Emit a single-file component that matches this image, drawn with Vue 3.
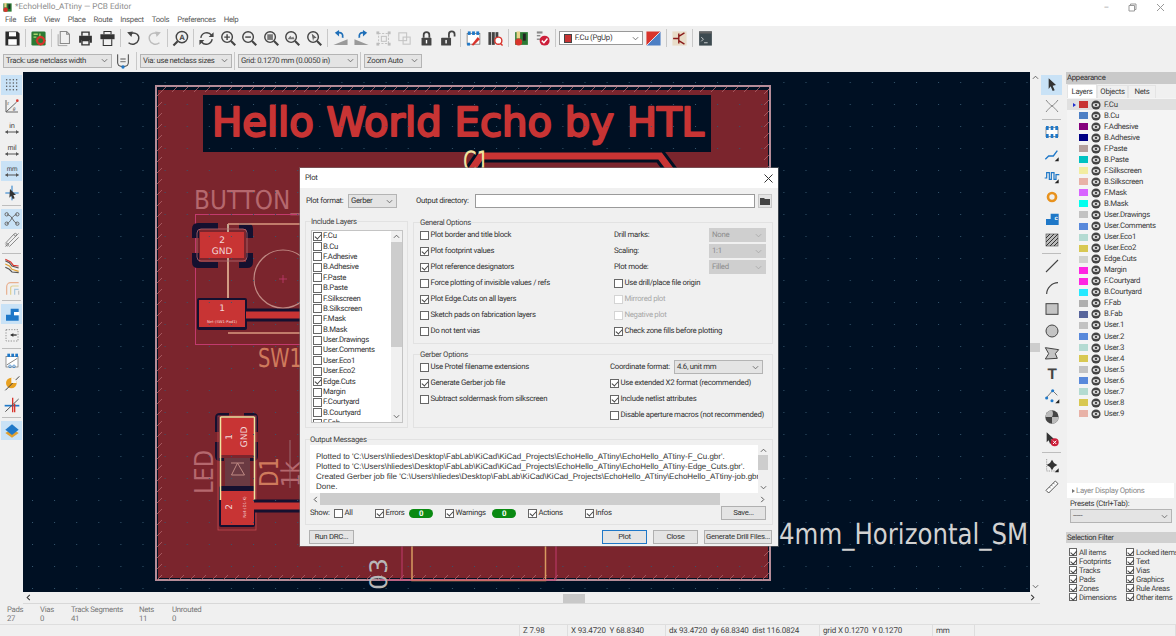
<script setup>
import { ref } from 'vue';

// icon bodies, all drawn on a 24x24 box
const icons = {
  save: '<path fill="#2b2b2b" d="M2 2h17l3 3v17H2z"/><rect x="7" y="3" width="10" height="6" fill="#fff"/><rect x="6" y="13" width="12" height="8" fill="#fff"/>',
  pcb: '<rect x="2" y="2" width="20" height="20" rx="2" fill="#2b7a34"/><path d="M5 6h6M5 10h4M14 5v5" stroke="#a9d66e" stroke-width="2"/><circle cx="15" cy="15" r="5" fill="none" stroke="#d8342c" stroke-width="3"/><path d="M15 8v3M15 19v3M8 15h3M19 15h3" stroke="#d8342c" stroke-width="2"/>',
  page: '<path fill="none" stroke="#8a8a8a" stroke-width="1.5" d="M6 2h9l4 4v13H6zM15 2v4h4"/><path stroke="#8a8a8a" fill="none" d="M3 6v16h13"/>',
  print: '<path fill="#333" d="M3 8h18v10h-3v-4H6v4H3z"/><path fill="none" stroke="#333" stroke-width="2" d="M7 8V3h10v5M7 15h10v6H7z"/>',
  plot: '<path fill="#333" d="M2 6h20v7H2z"/><path fill="none" stroke="#333" stroke-width="1.5" d="M7 6V2h10v4M6 13v9h12v-9"/>',
  undo: '<path fill="none" stroke="#444" stroke-width="2" d="M7 5c9-3 14 3 12 9s-9 8-14 4"/><path fill="#444" d="M3 3l8-1-2 8z"/>',
  redo: '<path fill="none" stroke="#bdbdbd" stroke-width="2" d="M17 5C8 2 3 8 5 14s9 8 14 4"/><path fill="#bdbdbd" d="M21 3l-8-1 2 8z"/>',
  find: '<circle cx="14" cy="10" r="8" fill="none" stroke="#444" stroke-width="2"/><path stroke="#444" stroke-width="3" d="M8 16l-6 6"/><text x="14" y="14" font-size="11" font-weight="700" text-anchor="middle" font-family="Liberation Sans" fill="#444">A</text>',
  refresh: '<path fill="none" stroke="#444" stroke-width="2" d="M4 11a8.500 8.500 0 0 1 15-4M20 13a8.500 8.500 0 0 1-15 4"/><path fill="#444" d="M22 3v7h-7zM2 21v-7h7z"/>',
  zin: '<circle cx="10" cy="10" r="7.500" fill="none" stroke="#444" stroke-width="2"/><path stroke="#444" stroke-width="2" d="M6 10h8M10 6v8"/><path stroke="#444" stroke-width="3" d="M15.500 15.500l6 6"/>',
  zout: '<circle cx="10" cy="10" r="7.500" fill="none" stroke="#444" stroke-width="2"/><path stroke="#444" stroke-width="2" d="M6 10h8"/><path stroke="#444" stroke-width="3" d="M15.500 15.500l6 6"/>',
  zfit: '<circle cx="10" cy="10" r="7.500" fill="none" stroke="#444" stroke-width="2"/><rect x="6" y="6" width="8" height="8" fill="#777"/><path stroke="#444" stroke-width="3" d="M15.500 15.500l6 6"/>',
  zobj: '<circle cx="10" cy="10" r="7.500" fill="none" stroke="#444" stroke-width="2"/><path d="M5 13l4-5 2 3 2-2 2 4z" fill="#777"/><path stroke="#444" stroke-width="3" d="M15.500 15.500l6 6"/>',
  zsel: '<circle cx="10" cy="10" r="7.500" fill="none" stroke="#444" stroke-width="2"/><path d="M8 5l7 6-4 1-1 4z" fill="#666"/><path stroke="#444" stroke-width="3" d="M15.500 15.500l6 6"/>',
  rotl: '<path d="M2 21l20-8v8z" fill="#9a9a9a"/><path fill="none" stroke="#1f6fb8" stroke-width="2.500" d="M8 4c6-1 8 2 7 7"/><path fill="#1f6fb8" d="M10 0v9L4 4z"/>',
  rotr: '<path d="M22 21L2 13v8z" fill="#9a9a9a"/><path fill="none" stroke="#1f6fb8" stroke-width="2.500" d="M16 4c-6-1-8 2-7 7"/><path fill="#1f6fb8" d="M14 0v9l6-5z"/>',
  group: '<g fill="none" stroke="#c4c4c4" stroke-width="1.500"><rect x="5" y="5" width="14" height="14" stroke-dasharray="3 2"/><rect x="9" y="9" width="7" height="7"/></g><g fill="#bdbdbd"><rect x="2" y="2" width="4" height="4"/><rect x="18" y="2" width="4" height="4"/><rect x="2" y="18" width="4" height="4"/><rect x="18" y="18" width="4" height="4"/></g>',
  ungroup: '<g fill="none" stroke="#c4c4c4" stroke-width="1.500"><rect x="4" y="4" width="11" height="11"/><rect x="10" y="10" width="10" height="10"/></g>',
  lock: '<path fill="none" stroke="#444" stroke-width="2.500" d="M8 11V7a4 4 0 0 1 8 0v4"/><rect x="5" y="11" width="14" height="11" rx="1" fill="#444"/><rect x="11" y="14" width="2" height="5" fill="#fff"/>',
  unlock: '<path fill="none" stroke="#444" stroke-width="2.500" d="M14 11V6a4 4 0 0 1 8 0v3"/><rect x="3" y="11" width="14" height="11" rx="1" fill="#444"/><rect x="9" y="14" width="2" height="5" fill="#fff"/>',
  net: '<rect x="3" y="5" width="18" height="15" fill="#fff" stroke="#666"/><g fill="#1f78c8"><rect x="4" y="2" width="4" height="5"/><rect x="10" y="2" width="4" height="5"/><rect x="16" y="2" width="4" height="5"/><rect x="3" y="18" width="4" height="4"/></g><path d="M9 21l9-11 3 3-9 9z" fill="#d8342c"/>',
  lib: '<g fill="#444"><rect x="2" y="3" width="4" height="18"/><rect x="7" y="3" width="4" height="18"/></g><rect x="12" y="3" width="4" height="13" fill="#444"/><circle cx="16" cy="15" r="5" fill="#fff" stroke="#d8342c" stroke-width="2"/><path stroke="#d8342c" stroke-width="2" d="M19 19l3 3"/>',
  board3d: '<rect x="3" y="3" width="18" height="18" fill="#2b7a34"/><rect x="5" y="2" width="5" height="10" fill="#e8d48a"/><rect x="14" y="5" width="4" height="10" fill="#222"/><circle cx="8" cy="17" r="5" fill="#d8342c"/>',
  drc: '<g fill="#888"><rect x="4" y="2" width="8" height="3"/><rect x="4" y="7" width="5" height="2"/><rect x="4" y="12" width="5" height="2"/></g><circle cx="15" cy="15" r="7" fill="#cc1f3a"/><path fill="none" stroke="#fff" stroke-width="2" d="M11 15l3 3 5-6"/>',
  swap: '<path d="M2 2h20L2 22z" fill="#d8342c"/><path d="M22 2v20H2z" fill="#4d7fc4"/><path d="M22 2L2 22" stroke="#fff"/>',
  scripting: '<rect x="3" y="2" width="18" height="20" fill="#3d4a50"/><rect x="3" y="2" width="18" height="3" fill="#666"/><path fill="none" stroke="#fff" d="M6 10l3 3-3 3M10 18h5"/>',
  schem: '<rect x="2" y="2" width="20" height="20" fill="#e8dcc8"/><path fill="none" stroke="#8a1a1a" stroke-width="2" d="M3 12h8M11 5v14M11 9l8-5M11 15l8 5"/>',
  trackw: '<path fill="none" stroke="#444" stroke-width="1.500" d="M4 2v13a5 5 0 0 0 5 5h6a5 5 0 0 0 5-5V2"/><path stroke="#888" stroke-width="2" d="M8 9h8M8 13h8"/><circle cx="12" cy="21" r="2.500" fill="#1f78c8"/>',
  gridd: '<g fill="#555"><circle cx="4" cy="4" r="1.100"/><circle cx="9" cy="4" r="1.100"/><circle cx="14" cy="4" r="1.100"/><circle cx="19" cy="4" r="1.100"/><circle cx="4" cy="9" r="1.100"/><circle cx="9" cy="9" r="1.100"/><circle cx="14" cy="9" r="1.100"/><circle cx="19" cy="9" r="1.100"/><circle cx="4" cy="14" r="1.100"/><circle cx="9" cy="14" r="1.100"/><circle cx="14" cy="14" r="1.100"/><circle cx="19" cy="14" r="1.100"/><circle cx="4" cy="19" r="1.100"/><circle cx="9" cy="19" r="1.100"/><circle cx="14" cy="19" r="1.100"/><circle cx="19" cy="19" r="1.100"/></g>',
  polar: '<path fill="none" stroke="#666" stroke-width="1.500" d="M3 3v18h18M3 21L19 6"/><circle cx="20" cy="4" r="2" fill="#d8342c"/><text x="5" y="10" font-size="8" font-family="Liberation Serif" fill="#444">r</text><text x="13" y="19" font-size="8" font-family="Liberation Serif" font-style="italic" fill="#444">θ</text>',
  inch: '<text x="12" y="12" font-size="11" text-anchor="middle" font-family="Liberation Sans" fill="#444">in</text><path d="M2 18h20" stroke="#555" stroke-width="1.500"/><path d="M2 18l4-3v6zM22 18l-4-3v6z" fill="#555"/>',
  mil: '<text x="12" y="12" font-size="11" text-anchor="middle" font-family="Liberation Sans" fill="#444">mil</text><path d="M2 18h20" stroke="#555" stroke-width="1.500"/><path d="M2 18l4-3v6zM22 18l-4-3v6z" fill="#555"/>',
  mm: '<text x="12" y="12" font-size="10" text-anchor="middle" font-family="Liberation Sans" fill="#444">mm</text><path d="M2 18h20" stroke="#555" stroke-width="1.500"/><path d="M2 18l4-3v6zM22 18l-4-3v6z" fill="#555"/>',
  cursor: '<path stroke="#1f78c8" stroke-width="1.500" d="M12 1v22M2 12h20"/><path d="M9 6l9 9-4 0 2 5-3 1-2-5-3 3z" fill="#333"/>',
  ratsnest: '<g fill="none" stroke="#666" stroke-width="1.500"><path d="M5 5c8 2 8 12 15 14M19 5C11 7 11 17 4 19"/><circle cx="4" cy="5" r="2.500"/><circle cx="20" cy="5" r="2.500"/><circle cx="4" cy="19" r="2.500"/><circle cx="20" cy="19" r="2.500"/></g>',
  curved: '<g fill="none" stroke="#8a8a8a" stroke-width="1.500"><path d="M2 17L15 3M8 22L22 8"/><circle cx="17" cy="4" r="2"/><circle cx="5" cy="19" r="2"/></g><path stroke="#666" d="M2 22L22 2"/>',
  hilite: '<g fill="none" stroke-width="1.800"><path stroke="#555" d="M2 4l6 3 4 5 10 3"/><path stroke="#e0a030" d="M2 9l6 3 4 5 10 3"/><path stroke="#d8342c" d="M2 2l8 4 4 5 8 1"/><path stroke="#555" d="M2 14l6 3 4 4 10 1"/></g>',
  vias: '<g fill="none" stroke-width="1.800"><path stroke="#e8b090" d="M4 22V10a6 6 0 0 1 6-6h12"/><path stroke="#e0d090" d="M10 22V12a3 3 0 0 1 3-3h9"/><path stroke="#a8c8e0" d="M16 22V14h6"/><path stroke="#c0c0c0" d="M22 22V16"/></g>',
  pad: '<path d="M3 22V13h7V4h12v18z" fill="#1f78c8"/><rect x="15" y="9" width="8" height="5" fill="#fff"/>',
  dashpad: '<rect x="3" y="4" width="18" height="17" fill="none" stroke="#666" stroke-dasharray="2 2"/><path d="M10 12h9" stroke="#333" stroke-width="2"/><path d="M10 12l4-3v6z" fill="#333"/>',
  netc: '<rect x="3" y="5" width="18" height="16" fill="#fff" stroke="#666"/><g fill="#1f78c8"><rect x="5" y="1" width="4" height="5"/><rect x="11" y="1" width="4" height="5"/><rect x="17" y="1" width="4" height="5"/></g><path d="M4 18L20 8" stroke="#888" stroke-width="1.500"/><g fill="none" stroke="#1f78c8"><circle cx="9" cy="20" r="2"/><circle cx="15" cy="20" r="2"/></g>',
  orange: '<circle cx="11" cy="12" r="8" fill="#e8a020"/><path d="M2 23L23 2" stroke="#444" stroke-width="1.500"/><path d="M11 4a8 8 0 0 1 8 8l-8 0z" fill="#f4f4f4"/>',
  cross: '<path d="M1 13h22" stroke="#1f78c8" stroke-width="2.500"/><path d="M13 1v22M16 10v13" stroke="#d8342c" stroke-width="2"/><path d="M2 22L22 3" stroke="#555" stroke-width="1.500"/>',
  layers: '<path d="M12 9l10 6-10 7-10-7z" fill="#e0a030"/><path d="M12 2l10 8-10 8-10-8z" fill="#1f78c8"/>',
  pointer: '<path d="M7 2l11 10-5 1 3 7-3 1-3-7-3 4z" fill="#333"/>',
  xcross: '<g stroke="#777" stroke-width="1.300" fill="none"><path d="M3 3c5 6 5 6 9 9s4 3 9 9M21 3c-5 6-5 6-9 9s-4 3-9 9"/></g>',
  fp: '<rect x="3" y="5" width="18" height="14" fill="#fff" stroke="#666"/><g fill="#1f78c8"><rect x="3" y="3" width="4" height="6"/><rect x="10" y="3" width="4" height="6"/><rect x="17" y="3" width="4" height="6"/><rect x="3" y="15" width="4" height="6"/><rect x="10" y="15" width="4" height="6"/><rect x="17" y="15" width="4" height="6"/></g>',
  route: '<path fill="none" stroke="#1f78c8" stroke-width="2" d="M2 20l5-5h7l6-8"/><path d="M16 23l6-6v6z" fill="#222"/>',
  tune: '<path fill="none" stroke="#1f78c8" stroke-width="1.800" d="M1 15h3V7h4v10h3V7h4v10h3V10h5"/><path d="M16 23l6-6v6z" fill="#222"/>',
  via: '<circle cx="12" cy="12" r="6" fill="none" stroke="#e8921e" stroke-width="4"/>',
  padc: '<path d="M3 21V12h7V4h12v17z" fill="#1f78c8"/><text x="18" y="14" font-size="9" font-weight="700" text-anchor="middle" font-family="Liberation Sans" fill="#fff">c</text>',
  zone: '<rect x="3" y="3" width="18" height="18" fill="#bbb" stroke="#555"/><path d="M3 9l6-6M3 15L15 3M3 21L21 3M9 21L21 9M15 21l6-6" stroke="#333" stroke-width="1.500"/>',
  line: '<path d="M3 21L21 3" stroke="#444" stroke-width="1.700"/>',
  arc: '<path d="M4 21C4 12 12 4 21 4" fill="none" stroke="#444" stroke-width="1.700"/>',
  rect: '<rect x="3" y="4" width="18" height="16" fill="#c4c4c4" stroke="#444" stroke-width="1.500"/>',
  circle: '<circle cx="12" cy="12" r="9" fill="#c4c4c4" stroke="#444" stroke-width="1.500"/>',
  poly: '<path d="M2 4l20 3-5 6 3 7-18 1 5-8z" fill="#c4c4c4" stroke="#444" stroke-width="1.500"/>',
  text: '<text x="12" y="20" font-size="23" font-weight="700" text-anchor="middle" font-family="Liberation Sans" fill="#444">T</text>',
  dim: '<path d="M4 14l9-10 7 7" fill="none" stroke="#666" stroke-width="1.300"/><circle cx="4" cy="15" r="2.300" fill="#1f78c8"/><circle cx="12" cy="19" r="2.300" fill="#1f78c8"/><circle cx="13" cy="4" r="2.300" fill="#1f78c8"/><path d="M17 23l6-6v6z" fill="#222"/>',
  anchor: '<circle cx="12" cy="12" r="10" fill="#444"/><path d="M12 2a10 10 0 0 1 0 10H2a10 10 0 0 1 10-10zM12 12h10a10 10 0 0 1-10 10z" fill="#bbb"/>',
  del: '<path d="M4 2l11 10-5 1 2 5-3 1-2-5-3 3z" fill="#333"/><circle cx="16" cy="17" r="6" fill="#cc1f3a"/><path d="M13.500 14.500l5 5M18.500 14.500l-5 5" stroke="#fff" stroke-width="1.500"/>',
  origin: '<path d="M4 3v18h17" fill="none" stroke="#777" stroke-dasharray="2 1.500"/><path d="M12 4l3 5 5 3-5 3-3 5-3-5-5-3 5-3z" fill="#333"/><path d="M16 23l6-6v6z" fill="#222"/>',
  measure: '<path d="M3 17L17 3l4 4L7 21z" fill="#fff" stroke="#555" stroke-width="1.500"/><path d="M8 12l2 2M11 9l2 2M14 6l2 2" stroke="#555"/>'
};

const topBar = ['save', '|', 'pcb', '|', 'page', 'print', 'plot', '|', 'undo', 'redo', '|', 'find', '|', 'refresh', 'zin', 'zout', 'zfit', 'zobj', 'zsel', '|', 'rotl', 'rotr', 'group', 'ungroup', 'lock', 'unlock', '|', 'net', 'lib', '|', 'board3d', 'drc', '|'];

const leftBar = [
  { icon: 'gridd', on: true }, { icon: 'polar' }, { icon: 'inch' }, { icon: 'mil' }, { icon: 'mm', on: true }, { icon: 'cursor' },
  { sep: true }, { icon: 'ratsnest', on: true }, { icon: 'curved' }, { sep: true }, { icon: 'hilite' }, { icon: 'vias' },
  { sep: true }, { icon: 'pad', on: true }, { icon: 'dashpad' }, { sep: true }, { icon: 'netc' }, { icon: 'orange' }, { icon: 'cross' },
  { sep: true }, { icon: 'layers', on: true }
];

const rightBar = [
  { icon: 'pointer', on: true }, { icon: 'xcross' }, { sep: true }, { icon: 'fp' }, { icon: 'route' }, { icon: 'tune' }, { icon: 'via' }, { icon: 'padc' }, { icon: 'zone' },
  { sep: true }, { icon: 'line' }, { icon: 'arc' }, { icon: 'rect' }, { icon: 'circle' }, { icon: 'poly' }, { icon: 'text' }, { icon: 'dim' }, { icon: 'anchor' }, { icon: 'del' },
  { sep: true }, { icon: 'origin' }, { icon: 'measure' }
];

const layers = [
  ['F.Cu', '#c83434'], ['B.Cu', '#4d7fc4'], ['F.Adhesive', '#84007c'], ['B.Adhesive', '#000084'], ['F.Paste', '#b4a09c'], ['B.Paste', '#00c2c2'],
  ['F.Silkscreen', '#f2eda1'], ['B.Silkscreen', '#e8b2a7'], ['F.Mask', '#d864ff'], ['B.Mask', '#02ffee'], ['User.Drawings', '#c2c2c2'], ['User.Comments', '#5989db'],
  ['User.Eco1', '#b4dbd2'], ['User.Eco2', '#d8c852'], ['Edge.Cuts', '#d0d2cd'], ['Margin', '#ff26e2'], ['F.Courtyard', '#ff26e2'], ['B.Courtyard', '#26e9ff'],
  ['F.Fab', '#afafaf'], ['B.Fab', '#58659b'], ['User.1', '#c2c2c2'], ['User.2', '#5989db'], ['User.3', '#b4dbd2'], ['User.4', '#d8c852'],
  ['User.5', '#c2c2c2'], ['User.6', '#5989db'], ['User.7', '#b4dbd2'], ['User.8', '#d8c852'], ['User.9', '#e8b2a7']
];

const filters = [
  ['All items', 'Locked items'], ['Footprints', 'Text'], ['Tracks', 'Vias'], ['Pads', 'Graphics'], ['Zones', 'Rule Areas'], ['Dimensions', 'Other items']
];

const plotLayers = ['F.Cu', 'B.Cu', 'F.Adhesive', 'B.Adhesive', 'F.Paste', 'B.Paste', 'F.Silkscreen', 'B.Silkscreen', 'F.Mask', 'B.Mask', 'User.Drawings', 'User.Comments', 'User.Eco1', 'User.Eco2', 'Edge.Cuts', 'Margin', 'F.Courtyard', 'B.Courtyard', 'F.Fab'];
const checkedLayers = ref(['F.Cu', 'Edge.Cuts']);

const generalLeft = [
  ['Plot border and title block', false], ['Plot footprint values', true], ['Plot reference designators', true], ['Force plotting of invisible values / refs', false],
  ['Plot Edge.Cuts on all layers', true], ['Sketch pads on fabrication layers', false], ['Do not tent vias', false]
];
const generalSelects = [['Drill marks:', 'None'], ['Scaling:', '1:1'], ['Plot mode:', 'Filled']];
const generalRight = [
  ['Use drill/place file origin', false, false], ['Mirrored plot', false, true], ['Negative plot', false, true], ['Check zone fills before plotting', true, false]
];
const gerberLeft = [['Use Protel filename extensions', false], ['Generate Gerber job file', true], ['Subtract soldermask from silkscreen', false]];
const gerberRight = [['Use extended X2 format (recommended)', true], ['Include netlist attributes', true], ['Disable aperture macros (not recommended)', false]];

const messages = [
  "Plotted to 'C:\\Users\\hliedes\\Desktop\\FabLab\\KiCad\\KiCad_Projects\\EchoHello_ATtiny\\EchoHello_ATtiny-F_Cu.gbr'.",
  "Plotted to 'C:\\Users\\hliedes\\Desktop\\FabLab\\KiCad\\KiCad_Projects\\EchoHello_ATtiny\\EchoHello_ATtiny-Edge_Cuts.gbr'.",
  "Created Gerber job file 'C:\\Users\\hliedes\\Desktop\\FabLab\\KiCad\\KiCad_Projects\\EchoHello_ATtiny\\EchoHello_ATtiny-job.gbrjob'.",
  'Done.'
];

const stats = [['Pads', '27', 33], ['Vias', '0', 31], ['Track Segments', '41', 68], ['Nets', '11', 33], ['Unrouted', '0', 50]];
const statusCells = [['', 520], ['Z 7.98', 48], ['X 93.4720  Y 68.8340', 98], ['dx 93.4720  dy 68.8340  dist 116.0824', 154], ['grid X 0.1270  Y 0.1270', 113], ['mm', 42], ['', 201]];
</script>

<template>
  <div class="app">
    <div class="titlebar">
      <svg class="app-logo" viewBox="0 0 24 24" v-html="icons.board3d"></svg>
      <span class="title-text">*EchoHello_ATtiny — PCB Editor</span>
      <div class="win-btns">
        <span>–</span>
        <svg width="9" height="9" viewBox="0 0 9 9"><path d="M1 2.500h5.500V8H1zM2.500 2.500V1H8v5.500H6.500" fill="none" stroke="#999"/></svg>
        <svg width="9" height="9" viewBox="0 0 9 9"><path d="M1 1l7 7M8 1L1 8" stroke="#999"/></svg>
      </div>
    </div>
    <div class="menubar">
      <span v-for="m in ['File', 'Edit', 'View', 'Place', 'Route', 'Inspect', 'Tools', 'Preferences', 'Help']" :key="m">{{ m }}</span>
    </div>

    <div class="toolbar">
      <template v-for="(name, i) in topBar" :key="i">
        <span v-if="name === '|'" class="tsep"></span>
        <span v-else class="tool"><svg viewBox="0 0 24 24" v-html="icons[name]"></svg></span>
      </template>
      <div class="combo layer-combo"><i class="swatch"></i><span>F.Cu (PgUp)</span><svg class="chev" viewBox="0 0 8 5"><path d="M1 1l3 3 3-3" fill="none" stroke="#666"/></svg></div>
      <span class="tool"><svg viewBox="0 0 24 24" v-html="icons.swap"></svg></span>
      <span class="tsep"></span>
      <span class="tool"><svg viewBox="0 0 24 24" v-html="icons.schem"></svg></span>
      <span class="tsep"></span>
      <span class="tool"><svg viewBox="0 0 24 24" v-html="icons.scripting"></svg></span>
    </div>

    <div class="toolbar2">
      <div class="combo w-track"><span>Track: use netclass width</span><svg class="chev" viewBox="0 0 8 5"><path d="M1 1l3 3 3-3" fill="none" stroke="#666"/></svg></div>
      <span class="tool small"><svg viewBox="0 0 24 24" v-html="icons.trackw"></svg></span>
      <span class="tsep tall"></span>
      <div class="combo w-via"><span>Via: use netclass sizes</span><svg class="chev" viewBox="0 0 8 5"><path d="M1 1l3 3 3-3" fill="none" stroke="#666"/></svg></div>
      <span class="tsep tall"></span>
      <div class="combo w-grid"><span>Grid: 0.1270 mm (0.0050 in)</span><svg class="chev" viewBox="0 0 8 5"><path d="M1 1l3 3 3-3" fill="none" stroke="#666"/></svg></div>
      <span class="tsep tall"></span>
      <div class="combo w-zoom"><span>Zoom Auto</span><svg class="chev" viewBox="0 0 8 5"><path d="M1 1l3 3 3-3" fill="none" stroke="#666"/></svg></div>
    </div>

    <div class="workspace">
      <div class="side-bar left-bar">
        <template v-for="(t, i) in leftBar" :key="i">
          <span v-if="t.sep" class="vsep"></span>
          <span v-else class="vtool" :class="{ on: t.on }"><svg viewBox="0 0 24 24" v-html="icons[t.icon]"></svg></span>
        </template>
      </div>

      <svg class="canvas" viewBox="23 72 1007 520" width="1007" height="520">
        <defs>
          <pattern id="dots" x="32" y="82" width="22.100" height="22" patternUnits="userSpaceOnUse">
            <rect width="1" height="1" fill="#35566e" />
          </pattern>
          <pattern id="hatch" x="0" y="0" width="11" height="11" patternUnits="userSpaceOnUse">
            <path d="M0 11L11 0" stroke="#b0636b" stroke-width="0.800" />
          </pattern>
        </defs>
        <rect x="23" y="72" width="1007" height="520" fill="#001023" />

        <!-- board -->
        <rect x="156" y="86" width="614" height="494" fill="#001023" stroke="#b58c98" stroke-width="2" />
        <rect x="158" y="90" width="610" height="488" fill="#7b252d" />
        <g fill="url(#hatch)">
          <rect x="157" y="87" width="612" height="5" />
          <rect x="157" y="87" width="5" height="493" />
          <rect x="157" y="575" width="612" height="5" />
          <rect x="764" y="87" width="5" height="493" />
        </g>

        <!-- title knockout -->
        <rect x="203" y="95" width="508" height="57" fill="#001023" />
        <text class="pcb-text" x="212" y="136" font-size="40" fill="#c83434" stroke="#c83434" stroke-width="2.200" stroke-linejoin="round" textLength="492" lengthAdjust="spacingAndGlyphs">Hello World Echo by HTL</text>

        <!-- top track and C1 -->
        <path d="M470 172L481 156H660L672 172" fill="none" stroke="#001023" stroke-width="13" />
        <path d="M470 172L481 156H660L672 172" fill="none" stroke="#c83434" stroke-width="7" />
        <text class="pcb-text" x="463" y="171" font-size="28" fill="#f0e4a0" textLength="26" lengthAdjust="spacingAndGlyphs">C1</text>

        <!-- button footprint -->
        <text class="pcb-text" x="194" y="209" font-size="26" fill="#b5686e" textLength="108" lengthAdjust="spacingAndGlyphs">BUTTON_</text>
        <rect x="195.500" y="214.500" width="140" height="130" fill="none" stroke="#c23a6e" />
        <path d="M192 238v-9q0-6 6-6h20v6h-19v9zM253 238v-9q0-6-6-6h-8v6h7v9zM192 253v9q0 6 6 6h20v-6h-19v-9zM253 253v9q0 6-6 6h-8v-6h7v-9z" fill="#14102f" />
        <path d="M228 224V330" stroke="#d8d0b0" stroke-width="1.500" />
        <path d="M228 224h22l300 0" stroke="#d89a80" stroke-width="1.500" />
        <path d="M228 333h270" stroke="#d89a80" stroke-width="1.500" />
        <path d="M228 262V298" stroke="#d89a80" stroke-width="1.500" />
        <rect x="197" y="229" width="50" height="32" rx="4" fill="none" stroke="#b86a70" stroke-width="0.800" />
        <rect x="200" y="232" width="44" height="26" fill="#c83434" />
        <rect x="197" y="298" width="50" height="32" rx="2" fill="#14102f" />
        <rect x="199" y="300" width="46" height="27" fill="#c83434" />
        <path d="M246 315H300" stroke="#14102f" stroke-width="13" />
        <path d="M246 315H300" stroke="#c83434" stroke-width="7" />
        <text class="pad-text" x="222" y="243" font-size="9" text-anchor="middle">2</text>
        <text class="pad-text" x="222" y="254" font-size="9" text-anchor="middle">GND</text>
        <text class="pad-text" x="222" y="311" font-size="9" text-anchor="middle">1</text>
        <text class="pad-text" x="222" y="323" font-size="3.800" text-anchor="middle">Net-(SW1-Pad1)</text>
        <circle cx="283" cy="279" r="29" fill="none" stroke="#c08a84" stroke-width="1.200" />
        <path d="M279 279h8M283 275v8" stroke="#c23a6e" stroke-width="0.800" />
        <text class="pcb-text" x="258" y="367" font-size="26" fill="#cf7a5c" textLength="44" lengthAdjust="spacingAndGlyphs">SW1</text>

        <!-- led footprint -->
        <path d="M215 432v-14q0-5 5-5h9v3h-10v16zM258 432v-14q0-5-5-5h-9v3h10v16zM215 442v14q0 5 5 5h4v-3h-5v-16zM258 442v14q0 5-5 5h-4v-3h5v-16z" fill="#14102f" />
        <rect x="218" y="416" width="38" height="114" fill="none" stroke="#c2484f" stroke-width="0.800" />
        <rect x="221" y="418" width="33" height="37" fill="#c83434" />
        <rect x="219" y="486" width="36" height="41" rx="2" fill="#14102f" />
        <rect x="221" y="491" width="33" height="34" fill="#c83434" />
        <path d="M220.500 417V500M254.500 417V500M220.500 417H254.500" fill="none" stroke="#f0e4a0" stroke-width="1.500" />
        <path d="M254 506H300" stroke="#14102f" stroke-width="13" />
        <path d="M254 506H300" stroke="#c83434" stroke-width="7" />
        <rect x="225" y="458" width="25" height="28" fill="#6a3a42" />
        <path d="M231 463h13M237.500 463l-6 12h13z" fill="none" stroke="#c08a84" />
        <text class="pad-text" transform="translate(232 437) rotate(-90)" font-size="9" text-anchor="middle">1</text>
        <text class="pad-text" transform="translate(247 437) rotate(-90)" font-size="9" text-anchor="middle">GND</text>
        <text class="pad-text" transform="translate(232 507) rotate(-90)" font-size="9" text-anchor="middle">2</text>
        <text class="pad-text" transform="translate(246 507) rotate(-90)" font-size="4" text-anchor="middle">Net-(D1-K)</text>
        <text class="pcb-text" transform="translate(213 494) rotate(-90)" font-size="26" fill="#b5686e" textLength="44" lengthAdjust="spacingAndGlyphs">LED</text>
        <text class="pcb-text" transform="translate(278 487) rotate(-90)" font-size="26" fill="#cf7a5c" textLength="30" lengthAdjust="spacingAndGlyphs">D1</text>
        <text class="pcb-text" transform="translate(300 487) rotate(-90)" font-size="26" fill="#b5686e" textLength="26" lengthAdjust="spacingAndGlyphs">1k</text>
        <path d="M290 440V488" stroke="#9a6a70" />

        <!-- below and right of the dialog -->
        <path d="M412 545V580.500H545.500V545" fill="none" stroke="#d89a60" stroke-width="1.500" />
        <path d="M556 545V580H380M402 545V580" fill="none" stroke="#c23a6e" />
        <text class="pcb-text" transform="translate(387 590) rotate(-90)" font-size="24" fill="#b8b8b8" textLength="32" lengthAdjust="spacingAndGlyphs">03</text>
        <text class="pcb-text" x="779" y="544" font-size="29" fill="#d2d2d2" textLength="268" lengthAdjust="spacingAndGlyphs">4mm_Horizontal_SMD</text>

        <rect x="23" y="72" width="1007" height="520" fill="url(#dots)" />
      </svg>

      <div class="vscroll">
        <svg class="sb-arrow" viewBox="0 0 8 5"><path d="M1 4l3-3 3 3" fill="none" stroke="#555"/></svg>
        <span class="vthumb"></span>
        <svg class="sb-arrow" viewBox="0 0 8 5"><path d="M1 1l3 3 3-3" fill="none" stroke="#555"/></svg>
      </div>

      <div class="side-bar right-bar">
        <template v-for="(t, i) in rightBar" :key="i">
          <span v-if="t.sep" class="vsep"></span>
          <span v-else class="vtool" :class="{ on: t.on }"><svg viewBox="0 0 24 24" v-html="icons[t.icon]"></svg></span>
        </template>
      </div>

      <div class="appearance">
        <div class="pane-head">Appearance</div>
        <div class="tabs"><span class="tab active">Layers</span><span class="tab t-obj">Objects</span><span class="tab t-nets">Nets</span></div>
        <div class="layer-list">
          <div v-for="(l, i) in layers" :key="l[0]" class="layer-row" :class="{ current: i === 0 }">
            <span class="layer-arrow"><i v-if="i === 0"></i></span>
            <i class="layer-swatch" :style="{ background: l[1] }"></i>
            <svg class="eye" viewBox="0 0 12 12"><circle cx="6" cy="6" r="5.500" fill="#444"/><ellipse cx="6" cy="6" rx="3.800" ry="2.300" fill="#ddd"/><circle cx="6" cy="6" r="1.400" fill="#444"/></svg>
            <span>{{ l[0] }}</span>
          </div>
        </div>
        <div class="display-opts"><i class="tri"></i>Layer Display Options</div>
        <div class="presets-label">Presets (Ctrl+Tab):</div>
        <div class="combo presets"><span>-----</span><svg class="chev" viewBox="0 0 8 5"><path d="M1 1l3 3 3-3" fill="none" stroke="#666"/></svg></div>
        <div class="pane-head filter-head">Selection Filter</div>
        <div class="filter-grid">
          <template v-for="f in filters" :key="f[0]">
            <label class="cb-row"><i class="cb on"></i>{{ f[0] }}</label>
            <label class="cb-row"><i class="cb on"></i>{{ f[1] }}</label>
          </template>
        </div>
      </div>

      <div class="hscroll">
        <svg class="sb-arrow-h" viewBox="0 0 5 8"><path d="M4 1L1 4l3 3" fill="none" stroke="#333" stroke-width="1.200"/></svg>
        <span class="hthumb"></span>
        <svg class="sb-arrow-h" viewBox="0 0 5 8"><path d="M1 1l3 3-3 3" fill="none" stroke="#333" stroke-width="1.200"/></svg>
      </div>
    </div>

    <div class="msg-panel">
      <div v-for="s in stats" :key="s[0]" class="stat" :style="{ width: s[2] + 'px' }"><span>{{ s[0] }}</span><span>{{ s[1] }}</span></div>
    </div>
    <div class="statusbar">
      <span v-for="(c, i) in statusCells" :key="i" class="status-cell" :style="{ width: c[1] + 'px' }">{{ c[0] }}</span>
    </div>

    <!-- Plot dialog -->
    <div class="dialog">
      <div class="dlg-title">
        <span>Plot</span>
        <svg width="9" height="9" viewBox="0 0 9 9"><path d="M.5.5l8 8M8.500.5l-8 8" stroke="#333"/></svg>
      </div>
      <div class="dlg-head">
        <span class="lbl-fmt">Plot format:</span>
        <div class="combo w-fmt"><span>Gerber</span><svg class="chev" viewBox="0 0 8 5"><path d="M1 1l3 3 3-3" fill="none" stroke="#666"/></svg></div>
        <span class="lbl-dir">Output directory:</span>
        <div class="dir-input"></div>
        <span class="folder-btn"><svg width="10" height="8" viewBox="0 0 10 8"><path d="M0 1h4l1 1h5v6H0z" fill="#444"/></svg></span>
      </div>

      <div class="dlg-main">
        <fieldset class="group layers-group">
          <legend>Include Layers</legend>
          <div class="listbox">
            <div class="list-items">
              <label v-for="p in plotLayers" :key="p" class="list-row"><i class="cb big" :class="{ on: checkedLayers.includes(p) }"></i>{{ p }}</label>
            </div>
            <div class="list-scroll">
              <svg class="sb-arrow" viewBox="0 0 8 5"><path d="M1 4l3-3 3 3" fill="none" stroke="#555"/></svg>
              <span class="list-thumb"></span>
              <svg class="sb-arrow" viewBox="0 0 8 5"><path d="M1 1l3 3 3-3" fill="none" stroke="#555"/></svg>
            </div>
          </div>
        </fieldset>

        <div class="options-col">
          <fieldset class="group general">
            <legend>General Options</legend>
            <div class="opt-grid general-grid">
              <div>
                <label v-for="o in generalLeft" :key="o[0]" class="opt-row"><i class="cb big" :class="{ on: o[1] }"></i>{{ o[0] }}</label>
              </div>
              <div>
                <div v-for="s in generalSelects" :key="s[0]" class="opt-row select-row">
                  <span>{{ s[0] }}</span>
                  <div class="combo disabled w-drill"><span>{{ s[1] }}</span><svg class="chev" viewBox="0 0 8 5"><path d="M1 1l3 3 3-3" fill="none" stroke="#aaa"/></svg></div>
                </div>
                <label v-for="o in generalRight" :key="o[0]" class="opt-row" :class="{ dim: o[2] }"><i class="cb big" :class="{ on: o[1] }"></i>{{ o[0] }}</label>
              </div>
            </div>
          </fieldset>

          <fieldset class="group gerber">
            <legend>Gerber Options</legend>
            <div class="opt-grid gerber-grid">
              <div>
                <label v-for="o in gerberLeft" :key="o[0]" class="opt-row"><i class="cb big" :class="{ on: o[1] }"></i>{{ o[0] }}</label>
              </div>
              <div>
                <div class="opt-row select-row">
                  <span>Coordinate format:</span>
                  <div class="combo w-coord"><span>4.6, unit mm</span><svg class="chev" viewBox="0 0 8 5"><path d="M1 1l3 3 3-3" fill="none" stroke="#666"/></svg></div>
                </div>
                <label v-for="o in gerberRight" :key="o[0]" class="opt-row"><i class="cb big" :class="{ on: o[1] }"></i>{{ o[0] }}</label>
              </div>
            </div>
          </fieldset>
        </div>
      </div>

      <fieldset class="group output">
        <legend>Output Messages</legend>
        <div class="msg-wrap">
          <div class="msg-text">
            <div v-for="(m, i) in messages" :key="i">{{ m }}</div>
          </div>
          <div class="msg-vscroll">
            <svg class="sb-arrow" viewBox="0 0 8 5"><path d="M1 4l3-3 3 3" fill="none" stroke="#555"/></svg>
            <span class="msg-vthumb"></span>
            <svg class="sb-arrow" viewBox="0 0 8 5"><path d="M1 1l3 3 3-3" fill="none" stroke="#555"/></svg>
          </div>
        </div>
        <div class="msg-hscroll">
          <svg class="sb-arrow-h" viewBox="0 0 5 8"><path d="M4 1L1 4l3 3" fill="none" stroke="#444"/></svg>
          <span class="msg-hthumb"></span>
          <svg class="sb-arrow-h" viewBox="0 0 5 8"><path d="M1 1l3 3-3 3" fill="none" stroke="#444"/></svg>
        </div>
        <div class="show-row">
          <span class="show-lbl">Show:</span>
          <label class="opt-row w-all"><i class="cb big"></i>All</label>
          <label class="opt-row w-err"><i class="cb big on"></i>Errors</label>
          <span class="pill pill-err">0</span>
          <label class="opt-row w-warn"><i class="cb big on"></i>Warnings</label>
          <span class="pill pill-warn">0</span>
          <label class="opt-row w-act"><i class="cb big on"></i>Actions</label>
          <label class="opt-row w-inf"><i class="cb big on"></i>Infos</label>
          <button class="btn save">Save...</button>
        </div>
      </fieldset>

      <div class="dlg-buttons">
        <button class="btn">Run DRC...</button>
        <span class="spacer"></span>
        <button class="btn primary">Plot</button>
        <button class="btn">Close</button>
        <button class="btn wide">Generate Drill Files...</button>
      </div>
    </div>
  </div>
</template>

<style scoped>
.app {
  position: relative;
  width: 1176px;
  height: 636px;
  overflow: hidden;
  background: #f0f0f0;
  font-family: Roboto, sans-serif;
  font-size: 7.800px;
  line-height: 10px;
  letter-spacing: -0.3px;
  text-rendering: geometricPrecision;
  white-space: nowrap;
  color: #3a3a3a;
}

.pcb-text { font-family: "DejaVu Sans", sans-serif; letter-spacing: 0; }
.pad-text { font-family: "DejaVu Sans", sans-serif; letter-spacing: 0; fill: #f2d8d8; }

.titlebar {
  height: 14px;
  background: #fff;
  display: flex;
  align-items: center;
  padding-left: 2px;
  font-size: 8.200px;
  letter-spacing: 0;
  color: #8c8c8c;
}
.app-logo { width: 11px; height: 11px; margin-right: 2px; }
.win-btns { margin-left: auto; display: flex; align-items: center; gap: 19px; padding-right: 11px; padding-top: 1px; }

.menubar {
  height: 12px;
  background: #fff;
  display: flex;
  gap: 8px;
  padding-left: 5px;
  align-items: center;
  color: #5a5a5a;
}

.toolbar {
  height: 24px;
  display: flex;
  align-items: center;
  padding-left: 1.250px;
}
.tool { width: 21.500px; height: 20px; display: flex; align-items: center; justify-content: center; flex: none; }
.tool svg { width: 17px; height: 17px; }
.tsep { width: 4.500px; height: 20px; flex: none; position: relative; }
.tsep::after { content: ""; position: absolute; left: 2px; top: 1px; bottom: 1px; width: 1px; background: #c8c8c8; }

.combo {
  height: 14px;
  flex: none;
  box-sizing: border-box;
  background: #e4e4e4;
  border: 1px solid #b4b4b4;
  display: flex;
  align-items: center;
  padding: 0 3px 0 2px;
  overflow: hidden;
}
.chev { width: 7px; height: 5px; margin-left: auto; flex: none; }
.layer-combo { width: 84px; background: #fff; margin-left: 1px; border-color: #999; margin-right: -0.500px; }
.swatch { width: 8px; height: 9px; background: #c83434; margin: 0 3px 0 2px; border: 1px solid #444; box-sizing: border-box; }

.toolbar2 {
  height: 22px;
  display: flex;
  align-items: center;
  padding: 0 0 1px 3px;
  box-sizing: border-box;
}
.w-track { width: 109px; }
.tool.small { width: 22px; }
.tool.small svg { width: 16px; height: 18px; }
.tsep.tall { width: 4px; margin: 0 1px 0 0; }
.w-via { width: 92px; margin-left: 1px; }
.w-grid { width: 120px; margin-left: 1px; }
.w-zoom { width: 58px; margin-left: 1px; }

.workspace {
  display: grid;
  grid-template-columns: 23px 1007px 10px 23px 3px 110px;
  grid-template-rows: 520px 12px;
  height: 532px;
}
.side-bar {
  grid-row: 1 / 3;
  background: #f0f0f0;
  display: flex;
  flex-direction: column;
  align-items: center;
}
.left-bar { padding-top: 2px; }
.right-bar { grid-column: 4; grid-row: 1 / 3; padding-top: 2px; }
.vtool { width: 21px; height: 21.600px; display: flex; align-items: center; justify-content: center; flex: none; padding: 1px 0; box-sizing: border-box; background-clip: content-box; }
.vtool svg { width: 16px; height: 16px; }
.vtool.on { background-color: #c9e2f6; }
.vsep { width: 19px; height: 1px; background: #bdbdbd; margin: 1.700px 0; flex: none; }

.canvas { grid-column: 2; grid-row: 1; display: block; }

.vscroll {
  grid-column: 3;
  grid-row: 1;
  display: flex;
  flex-direction: column;
  align-items: center;
  justify-content: space-between;
  padding: 3px 0;
  box-sizing: border-box;
  position: relative;
}
.vthumb { position: absolute; left: 0; top: 271px; width: 10px; height: 9px; background: #cdcdcd; }
.sb-arrow { width: 7px; height: 5px; flex: none; }
.sb-arrow-h { width: 5px; height: 7px; flex: none; }

.hscroll {
  grid-column: 2 / 4;
  grid-row: 2;
  display: flex;
  align-items: center;
  justify-content: space-between;
  padding: 0 5px 0 3px;
  position: relative;
  border-bottom: 1px solid #d8d8d8;
  box-sizing: border-box;
}
.hthumb { position: absolute; left: 540px; top: 2px; height: 9px; width: 22px; background: #c8c8c8; }

.appearance {
  grid-column: 6;
  grid-row: 1 / 3;
  display: flex;
  flex-direction: column;
}
.pane-head {
  height: 12px;
  background: #c9c9c9;
  color: #333;
  display: flex;
  align-items: center;
  padding-left: 1px;
}
.tabs { display: flex; height: 14px; padding-left: 1px; align-items: flex-end; }
.tab { height: 13px; display: flex; align-items: center; justify-content: center; background: #f0f0f0; border: 1px solid #e4e4e4; border-bottom: none; box-sizing: border-box; }
.tab.active { background: #fff; height: 14px; width: 30px; }
.t-obj { width: 31px; }
.t-nets { width: 28px; }

.layer-list {
  height: 385px;
  margin-left: 1px;
  padding-top: 1px;
  background: #f4f4f4;
  box-sizing: border-box;
}
.layer-row { height: 11.050px; display: flex; align-items: center; }
.layer-row.current { background: #e0e0e0; }
.layer-arrow { width: 12px; display: flex; justify-content: center; padding-left: 2px; box-sizing: border-box; }
.layer-arrow i { width: 0; height: 0; border-left: 3px solid #2030d0; border-top: 2.500px solid transparent; border-bottom: 2.500px solid transparent; }
.layer-swatch { width: 9px; height: 7px; margin-right: 3px; }
.eye { width: 10px; height: 10px; margin-right: 3px; }

.display-opts {
  height: 15px;
  background: #fff;
  margin-left: 1px;
  margin-right: 2px;
  display: flex;
  align-items: center;
  color: #8a8a8a;
  padding-left: 5px;
}
.tri { width: 0; height: 0; border-left: 3px solid #777; border-top: 2px solid transparent; border-bottom: 2px solid transparent; margin-right: 1px; }
.presets-label { padding: 1px 0 0 4px; height: 10px; line-height: 10px; }
.presets { width: 102px; margin-left: 4px; color: #555; }
.filter-head { margin-top: 9px; height: 11px; background: #d0d0d0; flex: none; }
.filter-grid {
  display: grid;
  grid-template-columns: 57px 1fr;
  grid-auto-rows: 9px;
  padding: 4.500px 0 0 3px;
}
.cb-row { display: flex; align-items: center; gap: 2px; color: #444; line-height: 9px; letter-spacing: -0.35px; }

.cb {
  position: relative;
  width: 8px;
  height: 8px;
  flex: none;
  box-sizing: border-box;
  border: 1px solid #666;
  background: #fff;
  display: inline-block;
}
.cb.big { width: 9px; height: 9px; }
.cb.on::after {
  content: "";
  position: absolute;
  left: 1.500px;
  top: -0.500px;
  width: 2.500px;
  height: 4.500px;
  border: solid #444;
  border-width: 0 1px 1px 0;
  transform: rotate(42deg);
}
.cb.big.on::after { left: 2px; top: 0; width: 3px; height: 5px; }

.msg-panel {
  height: 20px;
  display: flex;
  padding: 1px 0 0 7px;
  box-sizing: border-box;
  color: #777;
}
.stat { display: flex; flex-direction: column; line-height: 9px; }
.statusbar {
  height: 12px;
  display: flex;
  border-top: 1px solid #dedede;
  box-sizing: border-box;
  color: #444;
  font-size: 8px;
  letter-spacing: -0.15px;
}
.status-cell { border-right: 1px solid #dedede; box-sizing: border-box; padding-left: 3px; white-space: pre; display: flex; align-items: center; flex: none; }

/* dialog sits over the canvas */
.dialog {
  position: absolute;
  left: 300px;
  top: 168px;
  width: 478px;
  height: 378px;
  background: #f0f0f0;
  box-shadow: 0 0 0 1px rgba(120, 120, 120, 0.5);
  color: #333;
}
.dlg-title {
  height: 20px;
  background: #fff;
  display: flex;
  align-items: center;
  justify-content: space-between;
  padding: 0 5px;
}
.dlg-head { display: flex; align-items: center; height: 14px; margin-top: 6px; padding-left: 6px; }
.lbl-fmt { width: 42px; }
.w-fmt { width: 49px; }
.lbl-dir { margin-left: 19px; width: 59px; }
.dir-input { width: 280px; height: 14px; background: #fff; border: 1px solid #9a9a9a; box-sizing: border-box; }
.folder-btn { width: 14px; height: 14px; margin-left: 3px; background: #e4e4e4; border: 1px solid #c8c8c8; box-sizing: border-box; display: flex; align-items: center; justify-content: center; }

.dlg-main { display: flex; margin-top: 8px; padding-left: 5px; }
.group { border: 1px solid #e2e2e2; margin: 0; padding: 0; min-width: 0; box-sizing: border-box; }
.group legend { padding: 0; margin-left: 0; line-height: 10px; height: 9px; color: #444; }
.layers-group { width: 103px; height: 211px; margin-top: 1px; padding: 4px 4px 0 5px; }
.listbox { display: flex; height: 193px; width: 92px; background: #fff; border: 1px solid #c4c4c4; box-sizing: border-box; overflow: hidden; }
.list-items { flex: 1; padding: 0 0 0 1px; overflow: hidden; }
.list-row { height: 10.400px; display: flex; align-items: center; gap: 1px; }
.list-scroll { width: 11px; flex: none; display: flex; flex-direction: column; align-items: center; justify-content: space-between; padding: 3px 0; box-sizing: border-box; background: #f0f0f0; position: relative; }
.list-thumb { position: absolute; left: 0; top: 11px; width: 11px; height: 105px; background: #cdcdcd; }

.options-col { margin-left: 5px; width: 360px; }
.general { margin-top: 2px; height: 126px; padding-left: 6px; }
.gerber { margin-top: 6px; height: 78px; padding-left: 6px; }
.opt-grid { display: grid; }
.general-grid { grid-template-columns: 194px minmax(0, 1fr); }
.gerber-grid { grid-template-columns: 190px minmax(0, 1fr); }
.opt-row { height: 16px; display: flex; align-items: center; gap: 1.500px; }
.opt-row.dim { color: #a8a8a8; }
.opt-row.dim .cb { border-color: #d4d4d4; }
.select-row { justify-content: space-between; }
.w-drill { width: 57px; background: #cfcfcf; border-color: #cfcfcf; color: #8c8c8c; margin-right: 6px; }
.w-coord { width: 89px; margin-right: 9px; }

.output { margin: 7px 5px 0; height: 90px; padding: 0 4px 0 4px; }
.msg-wrap { display: flex; height: 48px; margin-top: 1px; }
.msg-text {
  width: 448px;
  background: #fff;
  box-sizing: border-box;
  padding: 7px 0 0 6px;
  font-family: "Liberation Sans", sans-serif;
  font-size: 8px;
  letter-spacing: 0;
  line-height: 10px;
  overflow: hidden;
  color: #333;
}
.msg-vscroll { width: 10px; flex: none; display: flex; flex-direction: column; align-items: center; justify-content: space-between; padding: 3px 0; box-sizing: border-box; position: relative; }
.msg-vthumb { position: absolute; left: 0; top: 10px; width: 10px; height: 15px; background: #cdcdcd; }
.msg-hscroll { display: flex; align-items: center; justify-content: space-between; height: 12px; padding: 0 3px; position: relative; width: 458px; box-sizing: border-box; }
.msg-hthumb { position: absolute; left: 10px; top: 0; height: 12px; width: 400px; background: #cdcdcd; }

.show-row { display: flex; align-items: center; height: 14px; margin-top: 1px; }
.show-lbl { width: 24px; }
.w-all { width: 41px; }
.w-err { width: 34px; }
.pill { width: 24px; height: 9px; border-radius: 5px; background: #0a8a12; color: #fff; font-weight: 700; text-align: center; line-height: 9px; flex: none; }
.pill-err { margin-right: 12px; }
.w-warn { width: 47px; }
.pill-warn { margin-right: 12px; }
.w-act { width: 57px; }
.w-inf { width: 48px; }
.btn {
  height: 14px;
  width: 45px;
  padding: 0;
  background: #e4e4e4;
  border: 1px solid #b0b0b0;
  font: inherit;
  letter-spacing: inherit;
  color: #333;
  flex: none;
}
.save { margin-left: auto; margin-right: 2px; }
.dlg-buttons { display: flex; gap: 6px; margin-top: 5px; padding: 0 6px 0 9px; }
.spacer { flex: 1; }
.btn.primary { border: 1.500px solid #1f78c8; }
.btn.wide { width: 68px; }
</style>

<style>
body { margin: 0; }
</style>
